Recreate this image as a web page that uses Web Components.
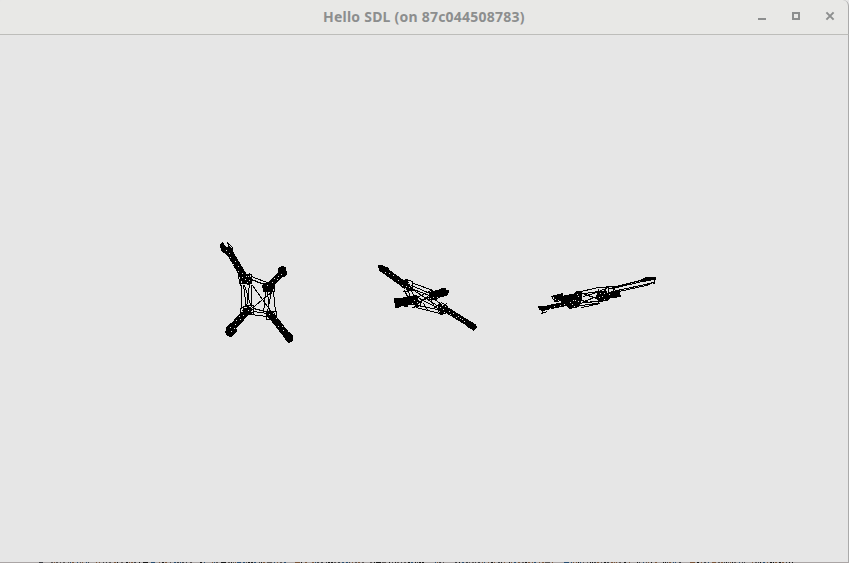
<!DOCTYPE html>
<html lang="en"><head><meta charset="utf-8"><title>Hello SDL</title>
<style>html,body{margin:0;width:849px;height:563px;overflow:hidden;background:#e6e6e6}</style></head>
<body><sdl-window><window-title-bar slot="bar">Hello SDL (on 87c044508783)</window-title-bar><wire-canvas></wire-canvas></sdl-window>
<script>
class SdlWindow extends HTMLElement{constructor(){super();this.attachShadow({mode:'open'}).innerHTML=`<style>
:host{display:grid;grid-template-rows:35px 527px 1px;width:849px;height:563px;box-sizing:border-box;background:#e6e6e6;overflow:hidden}
.body{border-right:1px solid #aaa;height:527px;width:848px}
</style><slot name="bar"></slot><div class="body"><slot></slot></div><backdrop-edge></backdrop-edge>`}}
class WindowTitleBar extends HTMLElement{constructor(){super();this.attachShadow({mode:'open'}).innerHTML=`<style>
:host{display:grid;grid-template-columns:1fr auto 1fr;align-items:center;box-sizing:border-box;height:35px;background:#e8e8e6;border-bottom:1px solid #bdbdba;border-right:1px solid #aaa;border-radius:3px 6px 0 0;color:#8c8e8e;font:bold 14px/30px "Noto Sans",sans-serif;padding-bottom:2px}
.t{grid-column:2;width:202px;white-space:nowrap;letter-spacing:.23px;padding-top:2px}
.b{justify-self:end;display:flex;gap:22px;padding-right:12px}svg{display:block}
</style><span class="t"><slot></slot></span><div class="b">
<svg width="12" height="12"><path d="M2 8h8v2H2z" fill="#8c8e8e"/></svg>
<svg width="12" height="12"><path d="M3 3h6v6H3z" fill="none" stroke="#8c8e8e" stroke-width="2"/></svg>
<svg width="12" height="12"><path d="M2.4 2.4l7.2 7.2M9.6 2.4l-7.2 7.2" stroke="#8c8e8e" stroke-width="2"/></svg></div>`}}
class BackdropEdge extends HTMLElement{constructor(){super();
let seed=7;const r=()=>(seed=(seed*16807)%2147483647)/2147483647;let s='';const c=['#151515','#3b3d42','#274c70','#795438','#55504f'];
const gaps=[[42,49],[89,92],[111,114],[153,159],[195,200],[207,211],[288,293],[306,310],[364,367],[398,401],[424,432],[447,455],[505,508],[555,560],[630,636],[658,663],[683,687],[713,716],[747,752]];
for(let x=39;x<793;){const w=1+(r()>.6)+(r()>.92)*3;if(!gaps.some(g=>x>=g[0]&&x<g[1]))s+=`<path fill="${c[Math.floor(r()*5)]}" d="M${x} 0h${w}v1h-${w}z"/>`;x+=w+1+Math.floor(r()*2.3)}
this.attachShadow({mode:'open'}).innerHTML=`<style>:host{display:block;background:#aaa5a5;height:1px}svg{display:block}</style><svg width="849" height="1" shape-rendering="crispEdges">${s}</svg>`}}

// Arms are [x1,y1,x2,y2,width]; holes are single background pixels in the dense wire clusters.
const frames=[
{arms:[[227,248,243,275,7],[283,272,268,287,6.5],[247,311,231,329,7.5],[271,315,289,338,7]],
 solid:'M220 244l3-2 3 5 3-1 3 3v5l-5 1-6-4zM278 268l4-2 4 1 1 7-3 3-6-3zM263 283h9l2 3-1 6h-9l-2-5zM239 275l11 0 2 7-4 3-7-3zM243 308l8-1 2 6-6 3-5-3zM266 311l8 0 2 7-5 2-5-4zM226 327l4-4 6 2 1 7-3 2-3 3-4-1-1-3-2-1 2-2zM285 335l4-3 4 3 0 6-4 2-4-3z',
 wire:'M222 245l0-2M227 242l5 5v6l-2 2M227 242l3 10 2 0v-4M238 274h13v9h-12zM240 273v12M249 273l1 11M251 276l18 7M250 279l19 7M251 279l13 5M241 284v22M243 285l3 22M244 285l7 22M249 284l-3 23M251 284v20M252 285l20 28M272 291l-22 18M267 291l2 23M271 291l-4 20M273 291l2 21M265 292l-2 21M240 308l6-3h7v9h-13zM245 304l8 6M253 308l16 4M253 311l14 2M251 314l15 2M267 311h9v8h-10zM263 283h11v8h-11z',
 holes:[[226,250],[229,253],[230,257],[228,260],[233,264],[235,261],[234,268],[238,266],[238,271],[242,273],[242,277],[245,279],[248,276],[249,280],[241,281],[247,282],[246,276],[281,274],[278,276],[277,279],[274,278],[272,282],[267,285],[242,308],[242,311],[244,307],[248,310],[251,311],[243,315],[239,316],[240,319],[236,320],[235,324],[230,327],[231,331],[234,328],[269,314],[273,313],[276,318],[278,326],[282,326],[283,330]]},
{arms:[[381,268,405,285,6.5],[397,303,418,299,8.5],[430,296,446,292,8],[442,307,474,327,6]],
 solid:'M378 265l4 0 7 3-2 6-8-4zM400 281l7-1 5 8-3 3-8-4zM394 298l5 0 1 2 8-2v9l-8-1-1 2h-4zM430 293l6-3 3 1 2-3h5v2l3 1-1 4-8 1-3 4-8 0zM411 297l6-1 3 6-4 4-5-2zM438 305l8 1 1 6-5 2-4-4zM467 322l6 0 4 5-3 4-8-5z',
 wire:'M402 281l3-2 7 2v9l-9 1M403 284l9 6M407 279l-1 11M413 283l20 7M411 285l21 9M413 289l16 6M407 289l4 10M410 289l5 9M415 298l17-9M418 302l14-7M404 290l7 14M417 305l20 4M416 307l27 7M412 289l26 17M420 299l17 8M429 297l6 11M432 297l10 8M434 291l-14 10M436 306l5-4 6 4v6l-7 2-3-5zM438 304l7 10M439 314l7-11M437 292l12-2M409 299l7-3 5 3-1 6-8 2M423 303l5 8',
 holes:[[385,272],[389,273],[393,275],[398,280],[402,285],[406,286],[408,283],[409,287],[410,284],[405,288],[412,303],[414,300],[417,302],[418,299],[433,297],[437,297],[430,298],[440,307],[443,309],[445,306],[442,305],[439,311],[444,312],[449,311],[450,314],[453,313],[456,317],[458,316],[460,318],[462,319],[464,321],[464,324]]},
{arms:[[541,309,574,302,4.5],[554,298,576,300,5],[598,296,620,294,6.5]],
 solid:'M538 306l6 0 1 3-3 2-3-1zM551 296l12-3v3l-3 2-8-1zM564 295l9-1 3-3 6 1v8l-3 7-10 2-3-5-5-2zM597 292l9-2 2 3 8-1 4 0 1 5-10 1-4 3-8 1-3-4zM640 280l6-3h10v3h-5v1l-10 1z',
 wire:'M542 309v4M541 313l6-2M551 296l2 3 17 0M554 299v2h4M576 292l22-5 16-1M578 294l20-3 10-4M583 296l17-5M583 301l14-5M581 300l17 4M578 303l24-3M579 305l21-2M582 293l17 6M581 307l19-4M598 288l0 15M605 287v12M608 285v6M613 286v7M602 287l12 1 2 5M612 287l32-8M612 288l34-8M612 291l42-9M614 292l36-8M654 278v5l-3-1',
 holes:[[550,308],[554,306],[560,305],[564,304],[555,299],[558,300],[570,302],[573,300],[575,300],[578,296],[578,301],[572,304],[574,306],[577,294],[600,293],[602,296],[604,293],[607,292],[609,294],[604,299],[599,297]]}
];
class WireCanvas extends HTMLElement{constructor(){super();
const art=frames.map(f=>`<g>${f.arms.map(a=>`<path d="M${a[0]} ${a[1]}L${a[2]} ${a[3]}" stroke="#000" stroke-width="${a[4]}"/>`).join('')}<path d="${f.solid}"/><path transform="translate(.5 .5)" fill="none" stroke="#000" d="${f.wire}"/>${f.holes.map(h=>`<path fill="#e6e6e6" d="M${h[0]} ${h[1]}h1v1h-1z"/>`).join('')}</g>`).join('');
this.attachShadow({mode:'open'}).innerHTML=`<style>:host{display:block;width:848px;height:527px}svg{display:block}</style><svg width="848" height="527" viewBox="0 35 848 527" shape-rendering="crispEdges">${art}</svg>`}}
customElements.define('backdrop-edge',BackdropEdge);customElements.define('window-title-bar',WindowTitleBar);customElements.define('wire-canvas',WireCanvas);customElements.define('sdl-window',SdlWindow);
</script></body></html>
